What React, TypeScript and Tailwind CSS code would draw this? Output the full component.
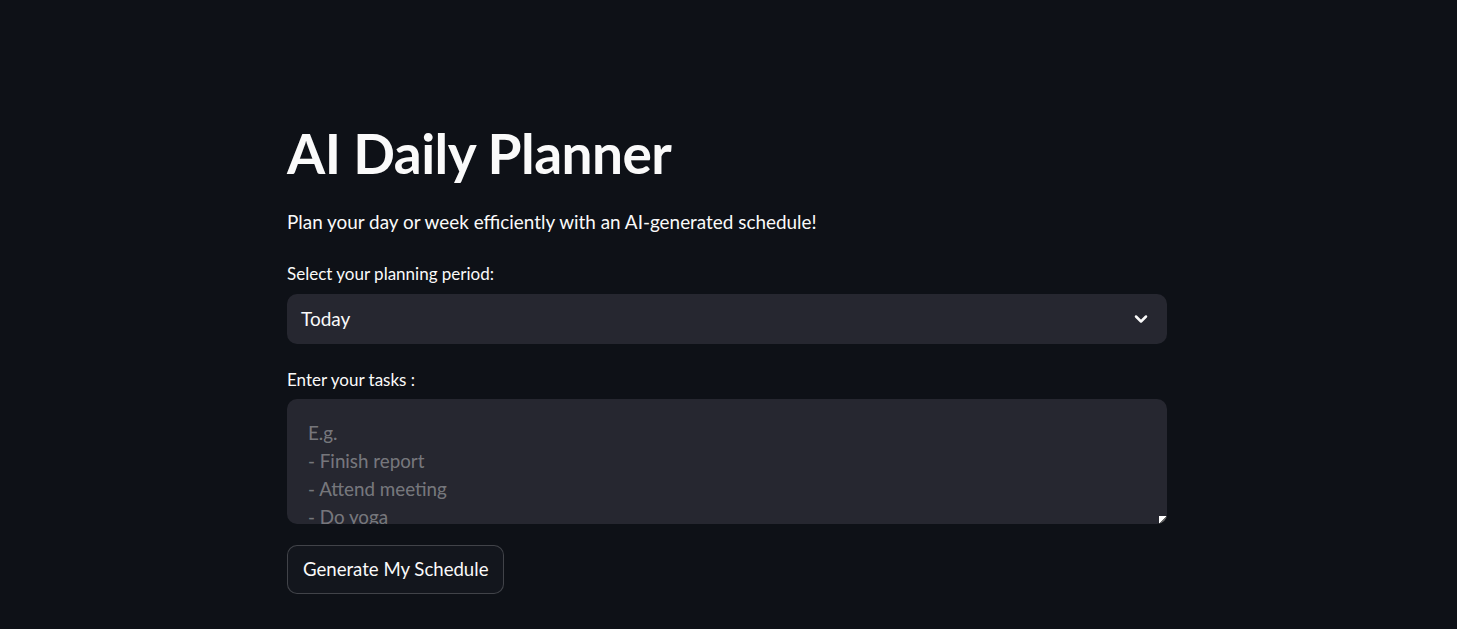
import { useState } from "react";

const font = { fontFamily: '"Lato", "Liberation Sans", sans-serif' };

export default function App() {
  const [period] = useState("Today");
  const [tasks, setTasks] = useState("");

  return (
    <div className="min-h-screen w-full bg-[#0e1117] text-[#fafafa]" style={font}>
      <div className="flex justify-center pr-[3px]">
        <div className="w-[880px] pt-[120px] pb-10">
          <h1 className="text-[55px] font-bold leading-[66px] tracking-[-0.01em]">
            AI Daily Planner
          </h1>

          <p className="mt-[21px] text-[18.9px] leading-[30px]">
            Plan your day or week efficiently with an AI-generated schedule!
          </p>

          <div className="mt-[23px]">
            <label className="block text-[17px] leading-[28px]">
              Select your planning period:
            </label>
            <button
              type="button"
              className="mt-[6px] flex h-[50px] w-full items-center justify-between rounded-[10px] bg-[#262730] pl-[14px] pr-[16px] text-left text-[19px]"
            >
              <span>{period}</span>
              <svg
                viewBox="0 0 24 24"
                className="h-[20px] w-[20px]"
                fill="none"
                stroke="currentColor"
                strokeWidth={3}
                strokeLinecap="round"
                strokeLinejoin="round"
                aria-hidden
              >
                <path d="M6 9l6 6 6-6" />
              </svg>
            </button>
          </div>

          <div className="mt-[22px]">
            <label className="block text-[17px] leading-[28px]">
              Enter your tasks :
            </label>
            <div className="relative mt-[5px] h-[125px] w-full overflow-hidden rounded-[10px] bg-[#262730]">
              <textarea
                value={tasks}
                onChange={(e) => setTasks(e.target.value)}
                placeholder={"E.g.\n- Finish report\n- Attend meeting\n- Do yoga"}
                className="block h-[160px] w-full resize-none bg-transparent px-[21px] pt-[20px] text-[18.8px] leading-[28px] text-[#fafafa] outline-none placeholder:text-[#fafafa]/40"
              />
              {/* resize handle */}
              <span className="absolute bottom-0 right-0 h-[8px] w-[8px] bg-[linear-gradient(135deg,#ffffff_50%,#6b6b6b_50%)]" />
            </div>
          </div>

          <button
            type="button"
            className="mt-[21px] h-[49px] rounded-[10px] border border-[#fafafa]/20 bg-[#13161d] px-[15px] text-[18.6px] leading-none"
          >
            Generate My Schedule
          </button>
        </div>
      </div>
    </div>
  );
}
